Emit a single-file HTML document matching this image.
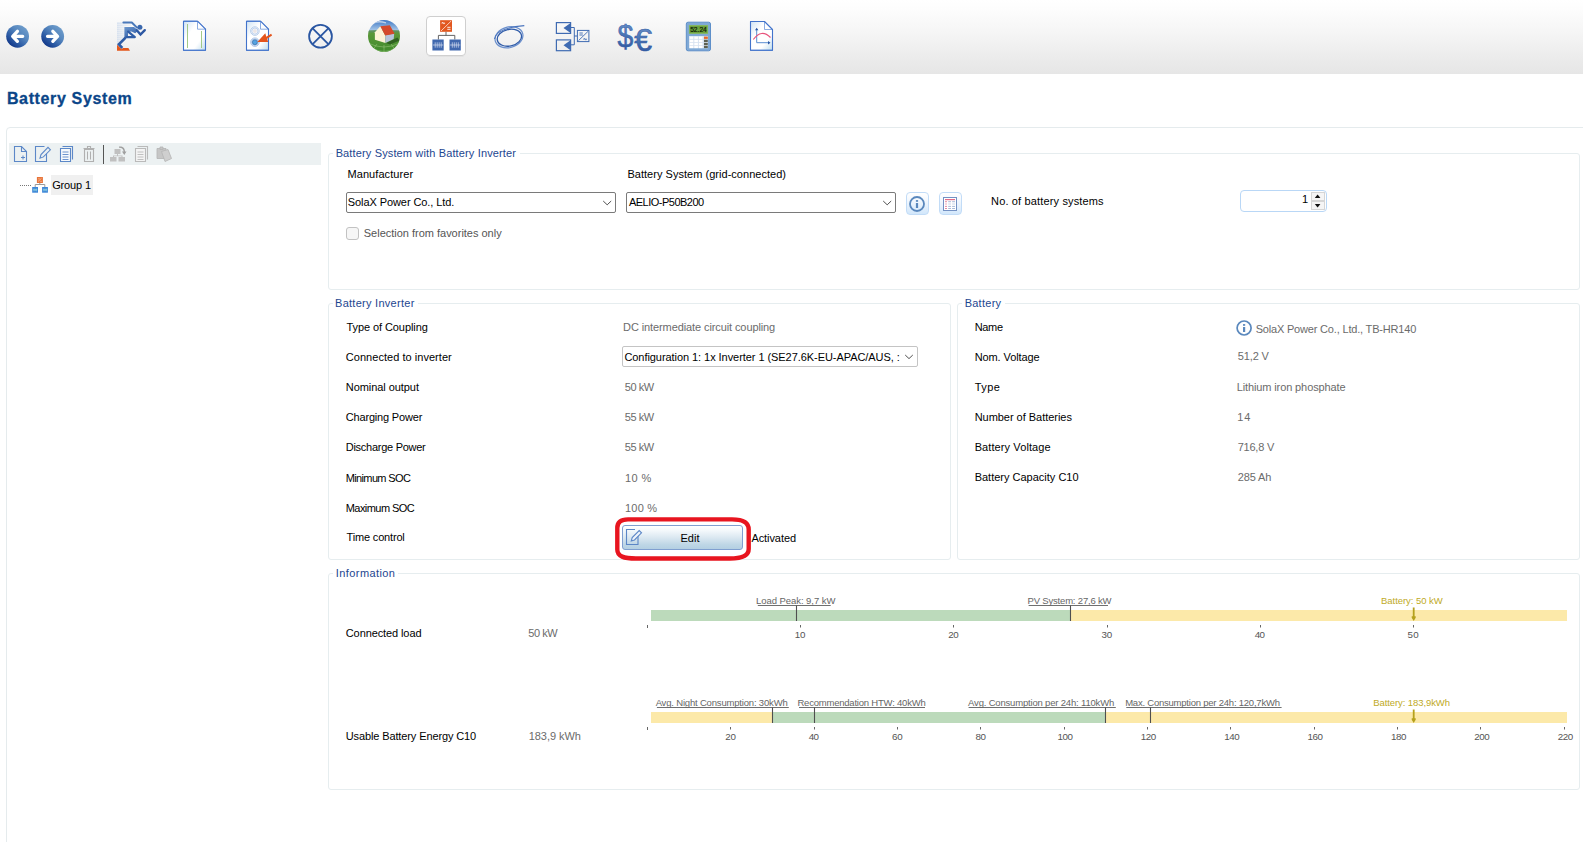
<!DOCTYPE html>
<html><head><meta charset="utf-8"><title>Battery System</title>
<style>
html,body{margin:0;padding:0;background:#fff;}
body{width:1583px;height:842px;position:relative;overflow:hidden;font-family:"Liberation Sans",sans-serif;font-size:11px;line-height:15px;color:#000;}
.abs,.t,.gb,.lg{position:absolute;}
.t{white-space:pre;}
#tb{left:0;top:0;width:1583px;height:74px;background:linear-gradient(#ffffff 0%,#fdfdfd 12%,#f5f5f5 45%,#ebebeb 80%,#e6e6e6 100%);}
#main{left:6px;top:127px;width:1600px;height:800px;border:1px solid #e5ebed;border-radius:4px;box-sizing:border-box;}
#ttb{left:9px;top:143px;width:312px;height:21.5px;background:#ecf1f2;}
.gb{border:1px solid #e6edef;border-radius:3px;box-sizing:border-box;}
.lg{background:#fff;height:10px;}
.combo{position:absolute;box-sizing:border-box;background:#fff;border:1px solid #7a7a7a;border-radius:2px;height:21px;}
.sbtn{position:absolute;box-sizing:border-box;border:1px solid #c2dcf7;border-radius:4px;background:linear-gradient(#ffffff 0%,#f3f8fe 35%,#d2e7fb 100%);}
</style></head><body>
<div id="tb" class="abs"></div>
<div id="main" class="abs"></div>
<div id="ttb" class="abs"></div>
<svg class="abs" style="left:0;top:0" width="800" height="74" viewBox="0 0 800 74">
<defs>
<linearGradient id="nb2" x1="0.850" y1="0.150" x2="0.200" y2="0.900"><stop offset="0" stop-color="#6d9bca"/><stop offset="0.350" stop-color="#5586be"/><stop offset="0.700" stop-color="#2e5da6"/><stop offset="1" stop-color="#12398a"/></linearGradient><radialGradient id="nb" cx="0.45" cy="0.2" r="0.85"><stop offset="0" stop-color="#7fa6d8"/><stop offset="0.45" stop-color="#3c6db3"/><stop offset="1" stop-color="#173f86"/></radialGradient>
<linearGradient id="pg" x1="0" y1="0" x2="1" y2="1"><stop offset="0" stop-color="#cfe3f4"/><stop offset="0.35" stop-color="#ffffff"/><stop offset="0.7" stop-color="#ffffff"/><stop offset="1" stop-color="#bfdcec"/></linearGradient>
<linearGradient id="bl" x1="0" y1="0" x2="0" y2="1"><stop offset="0" stop-color="#6f96cc"/><stop offset="1" stop-color="#274f99"/></linearGradient>
<linearGradient id="sky" x1="0" y1="0" x2="0" y2="1"><stop offset="0" stop-color="#3f78c4"/><stop offset="1" stop-color="#b7d3ee"/></linearGradient>
<linearGradient id="grass" x1="0" y1="0" x2="0" y2="1"><stop offset="0" stop-color="#5f9a3a"/><stop offset="1" stop-color="#3f8a2c"/></linearGradient>
<clipPath id="gc"><circle cx="384" cy="36" r="16"/></clipPath>
</defs>
<!-- back / forward -->
<circle cx="17.600" cy="36.300" r="11.400" fill="url(#nb2)"/>
<path d="M17.400 31.300 L12.700 36.300 L17.400 41.300 M13 36.300 H22.700" fill="none" stroke="#fff" stroke-width="3.300" stroke-linecap="round" stroke-linejoin="round"/>
<circle cx="52.650" cy="36.300" r="11.400" fill="url(#nb2)"/>
<path d="M52.850 31.300 L57.550 36.300 L52.850 41.300 M57.250 36.300 H47.550" fill="none" stroke="#fff" stroke-width="3.300" stroke-linecap="round" stroke-linejoin="round"/>
<!-- runner -->
<g>
<defs><linearGradient id="bl2" x1="0" y1="0" x2="0.6" y2="1"><stop offset="0" stop-color="#6e99cf"/><stop offset="1" stop-color="#2f5ca6"/></linearGradient><linearGradient id="sl" x1="0" y1="0" x2="1" y2="0"><stop offset="0" stop-color="#b9cde8"/><stop offset="1" stop-color="#b9cde8" stop-opacity="0.25"/></linearGradient></defs>
<g fill="url(#sl)"><rect x="117" y="22.700" width="14" height="0.800"/><rect x="117" y="24.700" width="14" height="0.800"/><rect x="117" y="26.700" width="9" height="0.800"/><rect x="117" y="28.700" width="8" height="0.800"/><rect x="117" y="30.700" width="8" height="0.800"/><rect x="117" y="32.700" width="8" height="0.800"/><rect x="117" y="34.700" width="8" height="0.800"/><rect x="117" y="36.700" width="8" height="0.800"/><rect x="117" y="38.700" width="6" height="0.800"/><rect x="117" y="40.700" width="4" height="0.800"/><rect x="117" y="42.700" width="2.500" height="0.800"/></g>
<path d="M123.400 22.500 H131.800 L137 27.600" fill="none" stroke="#4a79ba" stroke-width="2" stroke-linecap="round" stroke-linejoin="round"/>
<circle cx="139.900" cy="27.200" r="2.500" fill="#3a68ae"/>
<path d="M124.400 27 H134 L138.200 30.400 L135.200 33.200 L131.500 31.600 L128 32 L128 36.200 L125.600 38.600 L124.400 37.600 Z" fill="url(#bl2)"/>
<path d="M128.200 31.600 L134.800 37.100 H126.600" fill="none" stroke="#305da6" stroke-width="2.300" stroke-linecap="round" stroke-linejoin="round"/>
<path d="M125.600 37.600 L118.900 44.300 L122.300 48" fill="none" stroke="#305da6" stroke-width="2.700" stroke-linecap="butt" stroke-linejoin="miter"/>
<path d="M136.800 30.300 L140.500 34.600 L144.800 30.200" fill="none" stroke="#2d58a3" stroke-width="2.400" stroke-linecap="round" stroke-linejoin="miter"/>
<path d="M117 44.700 L121.700 49.300 L122.800 48.100 H128.400 L130 50.800 H117 Z" fill="#e4571b"/>
</g>
<!-- doc -->
<g>
<path d="M183.500 21.200 H197.500 L205.500 29.200 V50.300 H183.500 Z" fill="url(#pg)" stroke="#4d7fd0" stroke-width="1"/>
<path d="M197.500 21.200 V29.200 H205.500" fill="#fdfeff" stroke="#6f98da" stroke-width="0.800"/>
<path d="M183.500 21.200 H197.500 L205.500 29.200 V50.300 H183.500 Z" fill="none" stroke="#4273cb" stroke-width="1.100" stroke-linejoin="round"/>
<path d="M187.500 24V48M201.500 31V48" stroke="#98c379" stroke-width="0.900"/>
</g>
<!-- doc radio -->
<g>
<path d="M246.500 21.200 H260.500 L268.500 29.200 V50.300 H246.500 Z" fill="url(#pg)" stroke="#4d7fd0" stroke-width="1"/>
<path d="M260.500 21.200 V29.200 H268.500" fill="#fdfeff" stroke="#6f98da" stroke-width="0.800"/>
<path d="M246.500 21.200 H260.500 L268.500 29.200 V50.300 H246.500 Z" fill="none" stroke="#4273cb" stroke-width="1.100" stroke-linejoin="round"/>
<circle cx="254.900" cy="31.100" r="4.300" fill="#f7fafd" stroke="#8fb0dd" stroke-width="0.600"/><circle cx="254.900" cy="31.100" r="3.100" fill="none" stroke="#9db9e2" stroke-width="0.600"/><circle cx="254.900" cy="31.100" r="2" fill="#ece6e6"/>
<circle cx="254.900" cy="42.200" r="4.300" fill="#f7fafd" stroke="#7fa4da" stroke-width="0.600"/><circle cx="254.900" cy="42.200" r="3.300" fill="none" stroke="#7fa4da" stroke-width="0.600"/><circle cx="254.900" cy="42.200" r="2.500" fill="#55a2e0" stroke="#2f6aa8" stroke-width="0.700"/>
<path d="M257.300 42 L265.300 33.200 L266.300 36.700 L271.100 33.700 L272.100 35.500 L267.200 38.700 L268.100 42 Z" fill="#e4541c"/>
</g>
<!-- circle x -->
<g fill="none" stroke="#2a56a2" stroke-width="1.800">
<circle cx="320.500" cy="36.300" r="11.400"/>
<path d="M312.400 28.200 L328.600 44.400 M328.600 28.200 L312.400 44.400"/>
</g>
<!-- globe house -->
<g clip-path="url(#gc)">
<rect x="368" y="20" width="32" height="12" fill="url(#sky)"/>
<rect x="368" y="30.500" width="32" height="22" fill="url(#grass)"/>
<path d="M368 30.800 Q384 28.500 400 30.800 V32.500 H368Z" fill="#5f8f6a" opacity="0.7"/>
<path d="M374 22.800 Q379 20.800 386 22.800" stroke="#e8eef6" stroke-width="1.400" fill="none" opacity="0.7"/>
<g stroke="#a6cf86" stroke-width="0.600" fill="none" opacity="0.800"><path d="M368 43 Q384 51 400 43M372 48 Q384 55 396 48M384 45V52M377 44L372 51M391 44L396 51"/></g>
<path d="M386 43 L397.500 37.500 L399.500 40.500 L390 44.500Z" fill="#25511c" opacity="0.750"/>
<path d="M374.900 32.300 L380.300 26.200 L385.200 35.300 L385.400 43 L374.900 39.800 Z" fill="#fdf3d6"/>
<path d="M385.200 35.300 L394.200 33.600 L393.700 38.900 L385.400 43 Z" fill="#b7c3da"/>
<path d="M380.300 26.200 L389.800 25.300 L394.600 33.700 L385.200 35.500 Z" fill="#d4492b"/>
</g>
<!-- selected button -->
<rect x="426.500" y="16.500" width="39" height="39" rx="3.500" fill="#fff" stroke="#cfcfcf"/>
<path d="M428.500 56.300 H463.500" stroke="#dcdcdc" stroke-width="0.800" fill="none"/>
<g>
<rect x="440.100" y="20.200" width="11.900" height="11.600" fill="#e2571f"/>
<path d="M441 31 L451.200 21" stroke="#fbd9c8" stroke-width="0.900"/>
<path d="M442 23.600v-1h1.300v1h1.300v-1" stroke="#fff" stroke-width="0.800" fill="none"/>
<path d="M447.300 27.300H450.500M447.300 29.300H450.500" stroke="#fff" stroke-width="0.900"/>
<path d="M446 31.800V35.400M438.400 39.500V35.400H454.800V39.500" stroke="#555" stroke-width="0.900" fill="none"/>
<rect x="432.400" y="39.500" width="11.300" height="11" fill="#4068ae"/>
<rect x="449.500" y="39.500" width="11.300" height="11" fill="#4068ae"/>
<g stroke="#d5e0f1" stroke-width="0.700" fill="none"><path d="M433 45H443.200M435.200 42.300V47.700M437.200 42.300V47.700M439.200 42.300V47.700M441.200 42.300V47.700"/><path d="M450.100 45H460.300M452.300 42.300V47.700M454.300 42.300V47.700M456.300 42.300V47.700M458.300 42.300V47.700"/></g>
</g>
<!-- cable -->
<g fill="none" stroke="#4f78c0" stroke-width="1.200">
<ellipse cx="509" cy="37.300" rx="14.200" ry="10.300" transform="rotate(-15 509 37.300)" stroke="#6a8fcd"/>
<ellipse cx="509.400" cy="37.700" rx="12.300" ry="8.300" transform="rotate(-12 509.400 37.700)" stroke="#2f5ba8" stroke-width="1.300"/>
<path d="M494.500 39 Q496.500 28 524.300 25.600" stroke="#4a74bd" stroke-width="1.100"/>
</g>
<!-- diagram -->
<g fill="none" stroke="#3f6bb2" stroke-width="1.200">
<rect x="556.400" y="22.600" width="14.200" height="10.800"/>
<rect x="556.400" y="39.900" width="14.200" height="10.800"/>
<path d="M571 27.500H574.300V44.800H571M574.300 36H577" stroke-width="1"/>
<rect x="577.400" y="30.400" width="11.500" height="11.200" stroke-width="1"/>
<path d="M578.500 40.600 L588 31.400" stroke-width="0.900"/>
<path d="M579.400 33H582.800M579.400 35H582.800" stroke-width="0.900"/>
<path d="M583.800 39.700v-1h1.300v1h1.300v-1" stroke-width="0.800"/>
</g>
<path d="M570.500 23 V33 L563.500 28 Z" fill="#3f6bb2"/><path d="M570.500 40.300 V50.300 L563.500 45.300 Z" fill="#3f6bb2"/>
<!-- $€ -->
<text x="617.600" y="46.500" font-family="Liberation Sans, sans-serif" font-size="31" fill="url(#bl)" stroke="#3a66ad" stroke-width="0.600" textLength="15.800" lengthAdjust="spacingAndGlyphs">$</text>
<text x="634.300" y="50.500" font-family="Liberation Sans, sans-serif" font-size="31" fill="url(#bl)" stroke="#2f5aa3" stroke-width="0.600" textLength="17.800" lengthAdjust="spacingAndGlyphs">€</text>
<!-- calculator -->
<g>
<rect x="686.300" y="22.200" width="24.200" height="28.600" rx="1.800" fill="#7fa9d6" stroke="#5e8fc9" stroke-width="1"/>
<rect x="689.200" y="25.300" width="18.600" height="8.300" fill="#6ea33f" stroke="#8fc25d" stroke-width="0.6"/>
<text x="690.200" y="32.300" font-family="Liberation Sans, sans-serif" font-size="7.200" fill="#0b1a05" stroke="#0b1a05" stroke-width="0.200" textLength="16.600" lengthAdjust="spacingAndGlyphs">52.24</text>
<rect x="689" y="36" width="19" height="12.300" fill="#d7e3f1"/>
<g fill="#fff"><rect x="689.700" y="36.600" width="3.600" height="2.300"/><rect x="694.300" y="36.600" width="3.600" height="2.300"/><rect x="698.900" y="36.600" width="3.600" height="2.300"/>
<rect x="689.700" y="39.700" width="3.600" height="2.300"/><rect x="694.300" y="39.700" width="3.600" height="2.300"/><rect x="698.900" y="39.700" width="3.600" height="2.300"/>
<rect x="689.700" y="42.800" width="3.600" height="2.300"/><rect x="694.300" y="42.800" width="3.600" height="2.300"/><rect x="698.900" y="42.800" width="3.600" height="2.300"/>
<rect x="689.700" y="45.800" width="3.600" height="2.300"/><rect x="694.300" y="45.800" width="3.600" height="2.300"/><rect x="698.900" y="45.800" width="3.600" height="2.300"/></g>
<rect x="704" y="36.600" width="3.800" height="2.300" fill="#e8662a"/>
<g fill="#5c6152"><rect x="704" y="39.700" width="3.800" height="2.300"/><rect x="704" y="42.800" width="3.800" height="2.300"/><rect x="704" y="45.800" width="3.800" height="2.300"/></g>
</g>
<!-- doc chart -->
<g>
<path d="M750.500 21.500 H764.500 L772.500 29.500 V50.300 H750.500 Z" fill="url(#pg)" stroke="#4d7fd0" stroke-width="1"/>
<path d="M764.500 21.500 V29.500 H772.500" fill="#fdfeff" stroke="#6f98da" stroke-width="0.800"/>
<path d="M750.500 21.500 H764.500 L772.500 29.500 V50.300 H750.500 Z" fill="none" stroke="#4273cb" stroke-width="1.100" stroke-linejoin="round"/>
<path d="M756.700 29.500V42.700H768.500" stroke="#5a8ed2" stroke-width="1" fill="none"/>
<path d="M755 30.200 L756.700 27.700 L758.400 30.200Z M768 41 L770.500 42.700 L768 44.400Z" fill="#2a56a5"/>
<path d="M753.300 39.500 Q761.500 28.500 770.500 37.500" stroke="#e8547c" stroke-width="1.200" fill="none"/>
</g>
</svg>

<!-- group boxes -->
<div class="gb" style="left:328px;top:153px;width:1252px;height:137px"></div>
<div class="lg" style="left:333px;top:149px;width:187px"></div>
<div class="gb" style="left:328px;top:303px;width:623px;height:257px"></div>
<div class="lg" style="left:333px;top:299px;width:85px"></div>
<div class="gb" style="left:957px;top:303px;width:623px;height:257px"></div>
<div class="lg" style="left:962px;top:299px;width:43px"></div>
<div class="gb" style="left:328px;top:573px;width:1252px;height:217px"></div>
<div class="lg" style="left:333px;top:569px;width:65px"></div>
<!-- tree selection -->
<div class="abs" style="left:51px;top:175px;width:42px;height:20px;background:#f0f0f0"></div>
<!-- combos -->
<div class="combo" style="left:346px;top:192px;width:270px"></div>
<div class="combo" style="left:626px;top:192px;width:270px"></div>
<div class="combo" style="left:622px;top:346px;width:296px;border-color:#c4c4c4"></div>
<!-- checkbox -->
<div class="abs" style="left:346px;top:227px;width:13px;height:13px;box-sizing:border-box;border:1px solid #c2c2c2;border-radius:3px;background:#f6f6f6"></div>
<!-- small buttons -->
<div class="sbtn" style="left:906px;top:192px;width:23px;height:23px"></div>
<div class="sbtn" style="left:939px;top:192px;width:23px;height:23px"></div>
<!-- spinner -->
<div class="abs" style="left:1240px;top:190px;width:87px;height:22px;box-sizing:border-box;border:1px solid #b9d7f6;border-radius:4px;background:#fff"></div>
<div class="abs" style="left:1311px;top:192px;width:14px;height:8.5px;box-sizing:border-box;border:1px solid #d6d6d6;background:#f5f5f5"></div>
<div class="abs" style="left:1311px;top:201px;width:14px;height:8.5px;box-sizing:border-box;border:1px solid #d6d6d6;background:#f5f5f5"></div>
<!-- edit button -->
<div class="abs" style="left:622px;top:525px;width:121px;height:25px;box-sizing:border-box;border:1px solid #7f9fd0;border-radius:3px;background:linear-gradient(#ffffff 0%,#f3f8fb 20%,#dbe8f1 50%,#bfd7e6 80%,#b3cfe2 100%)"></div>
<!-- charts -->
<div class="abs" style="left:651px;top:610px;width:419px;height:11px;background:#bcdabb"></div>
<div class="abs" style="left:1070px;top:610px;width:497px;height:11px;background:#fce9a9"></div>
<div class="abs" style="left:651px;top:712px;width:121px;height:11px;background:#fce9a9"></div>
<div class="abs" style="left:772px;top:712px;width:333px;height:11px;background:#bcdabb"></div>
<div class="abs" style="left:1105px;top:712px;width:462px;height:11px;background:#fce9a9"></div>
<svg class="abs" style="left:0;top:0" width="1583" height="842" viewBox="0 0 1583 842">
<!-- combo chevrons -->
<g fill="none" stroke="#505050" stroke-width="1">
<path d="M603.200 201 L607.200 204.800 L611.200 201"/>
<path d="M883.200 201 L887.200 204.800 L891.200 201"/>
<path d="M905.200 355 L909 358.600 L912.800 355"/>
</g>
<!-- spinner arrows -->
<path d="M1314.8 198 L1317.6 194.6 L1320.4 198Z" fill="#111"/>
<path d="M1314.8 204 L1317.6 207.4 L1320.4 204Z" fill="#111"/>
<!-- info icon button -->
<circle cx="917" cy="204" r="7" fill="none" stroke="#5a88bd" stroke-width="1.800"/>
<rect x="915.900" y="203" width="2.200" height="5" fill="#5a88bd"/><rect x="915.900" y="200.100" width="2.200" height="1.700" fill="#5a88bd"/>
<!-- table icon button -->
<g>
<rect x="943.500" y="197.500" width="13" height="13" fill="#fff" stroke="#7391c3" stroke-width="1"/>
<rect x="945" y="199" width="10" height="1.200" fill="#e26a86"/>
<g fill="#e68aa0"><rect x="945" y="201.200" width="2" height="1"/><rect x="945" y="203.500" width="2" height="1" opacity="0.7"/><rect x="945" y="205.900" width="2" height="1"/><rect x="945" y="208" width="2" height="1"/></g>
<g fill="#a9bbd8"><rect x="948.200" y="201.200" width="2.800" height="1"/><rect x="948.200" y="203.500" width="2.800" height="1" opacity="0.6"/><rect x="948.200" y="205.900" width="2.800" height="1"/><rect x="948.200" y="208" width="2.800" height="1"/>
<rect x="952.100" y="201.200" width="2.900" height="1"/><rect x="952.100" y="203.500" width="2.900" height="1" opacity="0.6"/><rect x="952.100" y="205.900" width="2.900" height="1"/><rect x="952.100" y="208" width="2.900" height="1"/></g>
</g>
<!-- info icon battery name -->
<circle cx="1244.100" cy="328" r="7" fill="none" stroke="#5a88bd" stroke-width="1.700"/>
<rect x="1243" y="327" width="2.200" height="5" fill="#5a88bd"/><rect x="1243" y="324.100" width="2.200" height="1.700" fill="#5a88bd"/>
<!-- edit button icon -->
<g fill="none" stroke="#5b86c6" stroke-width="1.1">
<path d="M635 529.500H626.500V544.500H638V536"/>
<path d="M631.300 541 L632.200 537.600 L639.200 530.600 L641.500 532.800 L634.500 539.900 Z" fill="#eef4fb"/>
</g>
<!-- red outline -->
<path d="M628 519.400 H732 C741 519.400 748.700 521.800 748.700 529.500 V549 C748.700 556.500 741 558.500 730 558.500 H636 C624 558.500 617.300 556.500 617.300 549.500 V528 C617.300 522 621 519.400 628 519.400 Z" fill="none" stroke="#e8151f" stroke-width="4.400" stroke-linejoin="round"/>
<!-- chart 1 -->
<g stroke="#6f6f6f" stroke-width="1" fill="none">
<path d="M757.8 605.5H830.7M1028.6 605.5H1108"/>
<path d="M656.9 707.5H788.8M799 707.5H925M968.6 707.5H1115.8M1126.3 707.5H1281.6"/>
</g>
<g stroke="#4f4f4f" stroke-width="1.100" fill="none">
<path d="M796.5 605.5V621M1070.5 605.5V621"/>
<path d="M772.5 707.5V723M814.5 707.5V723M1105.5 707.5V723M1150.5 707.5V723"/>
</g>
<g stroke="#666" stroke-width="1" fill="none">
<path d="M647.5 625V628M800.5 625V627.5M953.5 625V627.5M1107.5 625V627.5M1260.5 625V627.5M1413.5 625V627.5"/>
<path d="M647.5 727V730M730.5 727V729.5M814.5 727V729.5M897.5 727V729.5M980.5 727V729.5M1064.5 727V729.5M1147.5 727V729.5M1230.5 727V729.5M1314.5 727V729.5M1397.5 727V729.5M1480.5 727V729.5M1564.5 727V729.5"/>
</g>
<!-- battery arrows -->
<g fill="#b5a11c" stroke="none">
<path d="M1412.800 607.600H1414.600V616.300H1415.700V617.800L1413.700 621L1411.700 617.800V616.300H1412.800Z"/>
<path d="M1412.800 709.600H1414.600V718.300H1415.700V719.800L1413.700 723L1411.700 719.800V718.300H1412.800Z"/>
</g>
<!-- tree toolbar icons -->
<g fill="none" stroke="#5c88c8" stroke-width="1.1">
<path d="M14.5 146.5H21.5L26.5 151.5V161.5H14.5Z"/><path d="M21.5 146.5V151.5H26.5"/>
<path d="M21 157.5H25M23 155.5V159.5" stroke-width="1"/>
<path d="M44.500 146.500H35.500V161.500H46.500V153"/>
<path d="M40 158.2 L41 154.6 L48 147.4 L50.4 149.8 L43.4 156.9 Z" fill="#ecf1f2"/>
<path d="M62.5 146.5H72.5V159.5"/><path d="M60.5 148.5H70.5V161.5H60.5Z" fill="#f7fafc"/>
<path d="M62.5 152H68.5M62.5 154.5H68.5M62.5 157H68.5M62.5 159.5H68.5" stroke-width="0.9"/>
</g>
<g fill="none" stroke="#b0b0b0" stroke-width="1.1">
<path d="M84.5 149.5H93.5V161.5H84.5Z"/><path d="M83.5 148.5H94.5M87.5 148V146.5H90.5V148"/>
<path d="M87.5 151.5V159.5M90.5 151.5V159.5" stroke-width="1"/>
</g>
<path d="M103.5 145V164" stroke="#555" stroke-width="1" fill="none"/>
<g fill="#c0c0c0" stroke="none">
<rect x="114.5" y="149" width="6" height="5"/><rect x="110" y="157" width="6.5" height="4.5"/><rect x="118.5" y="157" width="6.5" height="4.5"/>
<path d="M117 154V155.5H113V157H114V156.3H121.5V157H122.500V155.5H118V154Z"/>
<path d="M119 146.5 C122.500 146 125 148 125 151.5 L126.500 151.5 L124.300 155 L122 151.5 L123.600 151.5 C123.500 149 122 147.600 119 147.700Z" fill="#9f9f9f"/>
</g>
<g fill="none" stroke="#bababa" stroke-width="1.1">
<path d="M137.500 146.500H147.500V159.500"/><path d="M135.500 148.500H145.500V161.500H135.500Z" fill="#f4f4f4"/>
<path d="M137.500 152H143.500M137.500 154.500H143.500M137.500 157H143.500M137.500 159.500H143.500" stroke-width="0.9"/>
</g>
<g fill="#c6c6c6" stroke="#b4b4b4" stroke-width="0.8">
<path d="M157 148.500H166V158.500H157Z"/><path d="M160 147H163V149.500H160Z"/>
<path d="M161.500 151.500 L168 149.500 L171.500 158.500 L165 161.500 Z" fill="#cfcfcf"/>
</g>
<!-- tree item -->
<path d="M20 185.500H31" stroke="#777" stroke-width="1" stroke-dasharray="1 1" fill="none"/>
<g>
<rect x="36.900" y="177" width="6" height="6" fill="#e8743a"/>
<path d="M38 181.500 L41.500 178.300 M38.200 178.800h1.500 M40.300 181.300h1.500" stroke="#f9c9a6" stroke-width="0.800" fill="none"/>
<path d="M39.800 183V184.500M35.200 187V184.500H44.800V187" stroke="#9a9a9a" stroke-width="1" fill="none"/>
<rect x="32.200" y="187" width="5.800" height="5.700" fill="#3d86d8"/><rect x="42.100" y="187" width="5.800" height="5.700" fill="#3d86d8"/>
<path d="M33 189.800H37.300M34 188.500V191.300M35.200 188.800V191M36.400 188.500V191.300 M42.900 189.800H47.200M43.900 188.500V191.300M45.100 188.800V191M46.300 188.500V191.300" stroke="#9fe0e0" stroke-width="0.600" fill="none"/>
</g>
</svg>

<span class="t" style="left:6.92px;top:88.8px;font-size:16px;line-height:20px;color:#0a4588;font-weight:bold;letter-spacing:0.64px;-webkit-text-stroke:0.3px #0a4588;">Battery System</span>
<span class="t" style="left:52.14px;top:178.0px;letter-spacing:-0.13px;">Group 1</span>
<span class="t" style="left:335.64px;top:146.0px;color:#1d4690;letter-spacing:0.14px;">Battery System with Battery Inverter</span>
<span class="t" style="left:347.50px;top:167.0px;letter-spacing:0.07px;">Manufacturer</span>
<span class="t" style="left:627.42px;top:167.0px;letter-spacing:0.03px;">Battery System (grid-connected)</span>
<span class="t" style="left:347.78px;top:195.0px;letter-spacing:-0.08px;">SolaX Power Co., Ltd.</span>
<span class="t" style="left:628.94px;top:195.0px;letter-spacing:-0.51px;">AELIO-P50B200</span>
<span class="t" style="left:363.78px;top:226.0px;color:#555;letter-spacing:-0.01px;">Selection from favorites only</span>
<span class="t" style="left:991.06px;top:194.0px;letter-spacing:0.15px;">No. of battery systems</span>
<span class="t" style="left:1302.06px;top:192.0px;">1</span>
<span class="t" style="left:335.06px;top:296.0px;color:#1d4690;letter-spacing:0.27px;">Battery Inverter</span>
<span class="t" style="left:346.58px;top:320.0px;letter-spacing:-0.09px;">Type of Coupling</span>
<span class="t" style="left:345.78px;top:350.0px;letter-spacing:0.04px;">Connected to inverter</span>
<span class="t" style="left:345.78px;top:380.0px;letter-spacing:-0.06px;">Nominal output</span>
<span class="t" style="left:345.78px;top:410.0px;letter-spacing:-0.18px;">Charging Power</span>
<span class="t" style="left:345.78px;top:440.0px;letter-spacing:-0.27px;">Discharge Power</span>
<span class="t" style="left:345.78px;top:471.0px;letter-spacing:-0.64px;">Minimum SOC</span>
<span class="t" style="left:345.78px;top:501.0px;letter-spacing:-0.56px;">Maximum SOC</span>
<span class="t" style="left:346.58px;top:530.0px;letter-spacing:-0.17px;">Time control</span>
<span class="t" style="left:623.06px;top:320.0px;color:#6b6b6b;letter-spacing:-0.10px;">DC intermediate circuit coupling</span>
<span class="t" style="left:624.42px;top:350.0px;letter-spacing:-0.06px;">Configuration 1: 1x Inverter 1 (SE27.6K-EU-APAC/AUS, :</span>
<span class="t" style="left:624.86px;top:380.0px;color:#6b6b6b;letter-spacing:-0.48px;">50 kW</span>
<span class="t" style="left:624.86px;top:410.0px;color:#6b6b6b;letter-spacing:-0.48px;">55 kW</span>
<span class="t" style="left:624.86px;top:440.0px;color:#6b6b6b;letter-spacing:-0.48px;">55 kW</span>
<span class="t" style="left:625.06px;top:471.0px;color:#6b6b6b;letter-spacing:0.37px;">10 %</span>
<span class="t" style="left:625.06px;top:501.0px;color:#6b6b6b;letter-spacing:0.20px;">100 %</span>
<span class="t" style="left:680.42px;top:531.0px;letter-spacing:0.05px;">Edit</span>
<span class="t" style="left:751.44px;top:531.0px;letter-spacing:-0.08px;">Activated</span>
<span class="t" style="left:964.64px;top:296.0px;color:#1d4690;letter-spacing:0.27px;">Battery</span>
<span class="t" style="left:974.64px;top:320.0px;letter-spacing:-0.32px;">Name</span>
<span class="t" style="left:974.64px;top:350.0px;letter-spacing:-0.09px;">Nom. Voltage</span>
<span class="t" style="left:974.64px;top:380.0px;letter-spacing:0.48px;">Type</span>
<span class="t" style="left:974.64px;top:410.0px;letter-spacing:-0.03px;">Number of Batteries</span>
<span class="t" style="left:974.64px;top:440.0px;letter-spacing:0.10px;">Battery Voltage</span>
<span class="t" style="left:974.64px;top:470.0px;">Battery Capacity C10</span>
<span class="t" style="left:1255.64px;top:322.0px;color:#6b6b6b;letter-spacing:-0.18px;">SolaX Power Co., Ltd., TB-HR140</span>
<span class="t" style="left:1237.86px;top:349.0px;color:#6b6b6b;letter-spacing:-0.16px;">51,2 V</span>
<span class="t" style="left:1236.64px;top:380.0px;color:#6b6b6b;letter-spacing:-0.11px;">Lithium iron phosphate</span>
<span class="t" style="left:1237.34px;top:410.0px;color:#6b6b6b;letter-spacing:0.90px;">14</span>
<span class="t" style="left:1237.64px;top:440.0px;color:#6b6b6b;letter-spacing:-0.21px;">716,8 V</span>
<span class="t" style="left:1237.64px;top:470.0px;color:#6b6b6b;letter-spacing:-0.10px;">285 Ah</span>
<span class="t" style="left:335.78px;top:566.0px;color:#1d4690;letter-spacing:0.42px;">Information</span>
<span class="t" style="left:345.78px;top:626.0px;letter-spacing:-0.10px;">Connected load</span>
<span class="t" style="left:528.28px;top:626.0px;color:#6b6b6b;letter-spacing:-0.44px;">50 kW</span>
<span class="t" style="left:345.78px;top:729.0px;letter-spacing:-0.12px;">Usable Battery Energy C10</span>
<span class="t" style="left:528.70px;top:729.0px;color:#6b6b6b;letter-spacing:-0.04px;">183,9 kWh</span>
<span class="t" style="left:756.06px;top:594.3px;font-size:9.5px;line-height:13.5px;color:#666;letter-spacing:-0.06px;">Load Peak: 9,7 kW</span>
<span class="t" style="left:1027.50px;top:594.3px;font-size:9.5px;line-height:13.5px;color:#666;letter-spacing:-0.18px;">PV System: 27,6 kW</span>
<span class="t" style="left:1381.06px;top:594.3px;font-size:9.5px;line-height:13.5px;color:#c0aa1f;letter-spacing:-0.05px;">Battery: 50 kW</span>
<span class="t" style="left:655.64px;top:696.3px;font-size:9.5px;line-height:13.5px;color:#666;letter-spacing:-0.18px;">Avg. Night Consumption: 30kWh</span>
<span class="t" style="left:797.42px;top:696.3px;font-size:9.5px;line-height:13.5px;color:#666;letter-spacing:-0.21px;">Recommendation HTW: 40kWh</span>
<span class="t" style="left:968.08px;top:696.3px;font-size:9.5px;line-height:13.5px;color:#666;letter-spacing:-0.18px;">Avg. Consumption per 24h: 110kWh</span>
<span class="t" style="left:1125.14px;top:696.3px;font-size:9.5px;line-height:13.5px;color:#666;letter-spacing:-0.22px;">Max. Consumption per 24h: 120,7kWh</span>
<span class="t" style="left:1373.28px;top:696.3px;font-size:9.5px;line-height:13.5px;color:#c0aa1f;letter-spacing:-0.09px;">Battery: 183,9kWh</span>
<span class="t" style="left:794.78px;top:628.0px;font-size:9.8px;line-height:13.8px;color:#555;letter-spacing:-0.32px;">10</span>
<span class="t" style="left:948.14px;top:628.0px;font-size:9.8px;line-height:13.8px;color:#555;letter-spacing:-0.32px;">20</span>
<span class="t" style="left:1101.50px;top:628.0px;font-size:9.8px;line-height:13.8px;color:#555;letter-spacing:-0.32px;">30</span>
<span class="t" style="left:1254.86px;top:628.0px;font-size:9.8px;line-height:13.8px;color:#555;letter-spacing:-0.90px;">40</span>
<span class="t" style="left:1407.42px;top:628.0px;font-size:9.8px;line-height:13.8px;color:#555;letter-spacing:0.48px;">50</span>
<span class="t" style="left:725.37px;top:730.0px;font-size:9.8px;line-height:13.8px;color:#555;letter-spacing:-0.32px;">20</span>
<span class="t" style="left:808.74px;top:730.0px;font-size:9.8px;line-height:13.8px;color:#555;letter-spacing:-0.74px;">40</span>
<span class="t" style="left:892.12px;top:730.0px;font-size:9.8px;line-height:13.8px;color:#555;letter-spacing:-0.32px;">60</span>
<span class="t" style="left:975.49px;top:730.0px;font-size:9.8px;line-height:13.8px;color:#555;letter-spacing:-0.32px;">80</span>
<span class="t" style="left:1057.49px;top:730.0px;font-size:9.8px;line-height:13.8px;color:#555;letter-spacing:-0.48px;">100</span>
<span class="t" style="left:1140.86px;top:730.0px;font-size:9.8px;line-height:13.8px;color:#555;letter-spacing:-0.48px;">120</span>
<span class="t" style="left:1224.23px;top:730.0px;font-size:9.8px;line-height:13.8px;color:#555;letter-spacing:-0.48px;">140</span>
<span class="t" style="left:1307.61px;top:730.0px;font-size:9.8px;line-height:13.8px;color:#555;letter-spacing:-0.48px;">160</span>
<span class="t" style="left:1390.98px;top:730.0px;font-size:9.8px;line-height:13.8px;color:#555;letter-spacing:-0.48px;">180</span>
<span class="t" style="left:1474.35px;top:730.0px;font-size:9.8px;line-height:13.8px;color:#555;letter-spacing:-0.48px;">200</span>
<span class="t" style="left:1557.72px;top:730.0px;font-size:9.8px;line-height:13.8px;color:#555;letter-spacing:-0.48px;">220</span>
</body></html>
